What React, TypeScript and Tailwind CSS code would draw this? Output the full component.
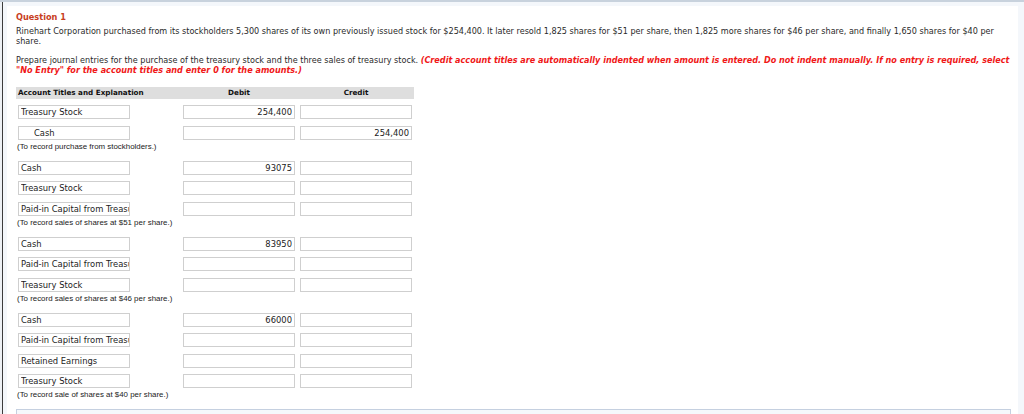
import React from 'react';

type Row =
  | { kind: 'entry'; account: string; indent?: boolean; debit?: string; credit?: string }
  | { kind: 'note'; text: string };

const rows: Row[] = [
  { kind: 'entry', account: 'Treasury Stock', debit: '254,400' },
  { kind: 'entry', account: 'Cash', indent: true, credit: '254,400' },
  { kind: 'note', text: '(To record purchase from stockholders.)' },
  { kind: 'entry', account: 'Cash', debit: '93075' },
  { kind: 'entry', account: 'Treasury Stock' },
  { kind: 'entry', account: 'Paid-in Capital from Treasury Stock' },
  { kind: 'note', text: '(To record sales of shares at $51 per share.)' },
  { kind: 'entry', account: 'Cash', debit: '83950' },
  { kind: 'entry', account: 'Paid-in Capital from Treasury Stock' },
  { kind: 'entry', account: 'Treasury Stock' },
  { kind: 'note', text: '(To record sales of shares at $46 per share.)' },
  { kind: 'entry', account: 'Cash', debit: '66000' },
  { kind: 'entry', account: 'Paid-in Capital from Treasury Stock' },
  { kind: 'entry', account: 'Retained Earnings' },
  { kind: 'entry', account: 'Treasury Stock' },
  { kind: 'note', text: '(To record sale of shares at $40 per share.)' },
];

const verdana = "font-['DejaVu_Sans',Verdana,sans-serif]";

function Box({ value, right, indent, className }: { value?: string; right?: boolean; indent?: boolean; className?: string }) {
  return (
    <input
      readOnly
      value={value ?? ''}
      className={`h-[14px] w-[112px] border border-[#cfcfcf] bg-white text-[8.4px] leading-[12px] text-[#222] outline-none ${verdana} ${
        right ? 'pr-[2px] text-right' : indent ? 'pl-[15px]' : 'pl-[2px]'
      } ${className ?? ''}`}
    />
  );
}

export default function App() {
  return (
    <div className={`h-[414px] w-[1024px] overflow-hidden border-t-2 border-[#c8d2dd] bg-[#eef1f5] ${verdana}`}>
      <div className="ml-[2px] h-full border-l border-[#3c3c3c] bg-[#f4f7fb] pl-[4px] pr-[6px] pt-[4px]">
        <div className="h-full bg-white pl-[9px] pr-[7px] pt-[6px]">
          <div className="text-[8.2px] font-bold leading-[10px] text-[#c8401e]">Question 1</div>
          <p className="mt-[5px] text-[8.1px] leading-[9.6px] text-[#2a2a2a]">
            Rinehart Corporation purchased from its stockholders 5,300 shares of its own previously issued stock for $254,400. It later resold 1,825 shares for $51 per share, then 1,825 more shares for $46 per share, and finally 1,650 shares for $40 per share.
          </p>
          <p className="mt-[10px] text-[8.1px] leading-[9.6px] text-[#2a2a2a]">
            Prepare journal entries for the purchase of the treasury stock and the three sales of treasury stock.{' '}
            <span className="font-bold italic text-[#f01818]">
              (Credit account titles are automatically indented when amount is entered. Do not indent manually. If no entry is required, select "No Entry" for the account titles and enter 0 for the amounts.)
            </span>
          </p>

          <div className="mt-[12px] w-[398px]">
            <div className="flex h-[12px] bg-[#dedede] text-[7.2px] font-bold leading-[12px] text-[#111]">
              <div className="w-[167px] pl-[2px]">Account Titles and Explanation</div>
              <div className="w-[112px] text-center">Debit</div>
              <div className="ml-[5px] w-[112px] text-center">Credit</div>
            </div>
            <div className="flex flex-col">
              {rows.map((r, i) =>
                r.kind === 'note' ? (
                  <div key={i} className="h-[14.5px] pl-[1px] font-['Liberation_Sans',Arial,sans-serif] text-[7.9px] leading-[14px] text-[#222]">
                    {r.text}
                  </div>
                ) : (
                  <div key={i} className={`flex ${i === 0 ? 'mt-[6px]' : 'mt-[6.5px]'}`}>
                    <Box value={r.account} indent={r.indent} className="ml-[2px]" />
                    <Box value={r.debit} right className="ml-[53px]" />
                    <Box value={r.credit} right className="ml-[5px]" />
                  </div>
                )
              )}
            </div>
          </div>
          <div className="mt-[6px] h-[20px] border border-[#c5d0e0] bg-[#f5f8fc]" />
        </div>
      </div>
    </div>
  );
}
